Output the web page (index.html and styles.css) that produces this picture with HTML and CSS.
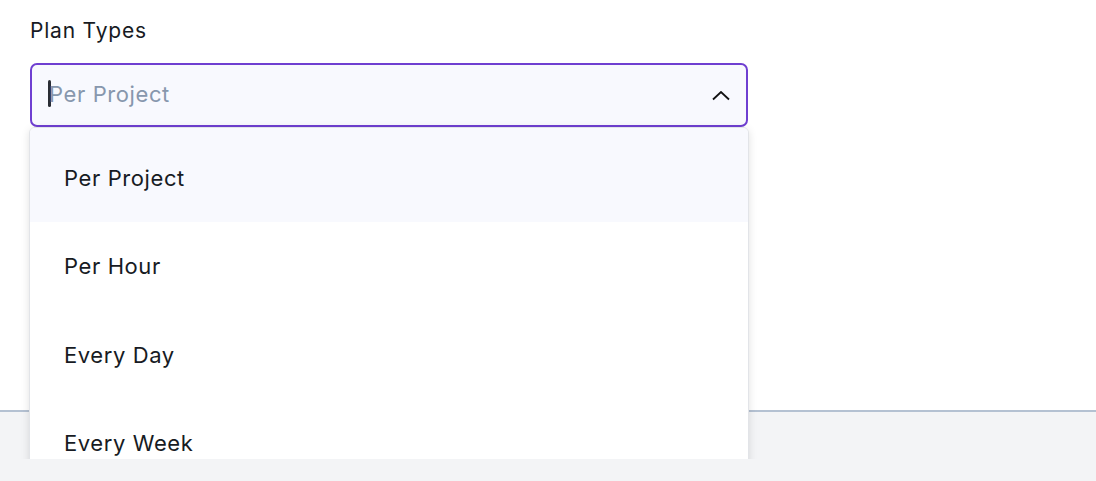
FILE: index.html
```html
<!DOCTYPE html>
<html>
<head>
<meta charset="utf-8">
<link rel="stylesheet" href="styles.css">
</head>
<body>
<div class="viewport">
  <section class="panel">
    <div class="field">
      <label class="label">Plan Types</label>
      <div class="select">
        <div class="control">
          <span class="caret"></span>
          <span class="placeholder">Per Project</span>
          <svg class="chevron" width="18" height="10" viewBox="0 0 18 10"><path d="M1 8.5 L9 1 L17 8.5" fill="none" stroke="#111" stroke-width="1.8"/></svg>
        </div>
        <ul class="menu">
          <li class="option active">Per Project</li>
          <li class="option">Per Hour</li>
          <li class="option">Every Day</li>
          <li class="option">Every Week</li>
        </ul>
      </div>
    </div>
  </section>
  <footer class="footer"></footer>
</div>
</body>
</html>
```

FILE: styles.css
```css
* { box-sizing: border-box; }
html, body { margin: 0; padding: 0; }
body {
  background: #f3f4f6;
  font-family: Inter, Roboto, "Liberation Sans", sans-serif;
  color: #171b23;
}
.viewport {
  height: 459px;
  overflow: hidden;
  display: flex;
  flex-direction: column;
}
.panel {
  background: #fff;
  height: 412px;
  border-bottom: 2px solid #b4c1d2;
  padding: 17px 0 0 30px;
  flex: none;
}
.field { width: 718px; }
.label {
  display: block;
  font-size: 21px;
  line-height: 28px;
  color: #171b23;
  margin-bottom: 18px;
  letter-spacing: 0.8px;
}
.select { position: relative; }
.control {
  height: 64px;
  border: 2px solid #6f3fd1;
  border-radius: 7px;
  background: #f8f9fe;
  display: flex;
  align-items: center;
  padding: 0 16px 3px 16px;
}
.caret {
  width: 3px;
  height: 27px;
  background: #2a2d34;
  border-radius: 2px;
  margin-right: -2px;
}
.placeholder {
  font-size: 22px;
  color: #8797ad;
  flex: 1;
  letter-spacing: 0.6px;
}
.chevron { display: block; margin-top: 4px; }
.menu {
  position: absolute;
  top: 64px;
  left: -1px;
  width: 720px;
  margin: 0;
  padding: 0;
  list-style: none;
  background: #fff;
  border: 1px solid #e2e4e8;
  border-radius: 6px;
  box-shadow: 0 2px 8px rgba(0,0,0,0.12);
  overflow: hidden;
}
.option {
  height: 88.5px;
  display: flex;
  align-items: center;
  padding-left: 34px;
  font-size: 22px;
  color: #171b23;
  letter-spacing: 0.6px;
}
.option.active { background: #f8f9fe; height: 94px; padding-top: 5px; }
.footer { flex: 1; background: #f3f4f6; }
```
